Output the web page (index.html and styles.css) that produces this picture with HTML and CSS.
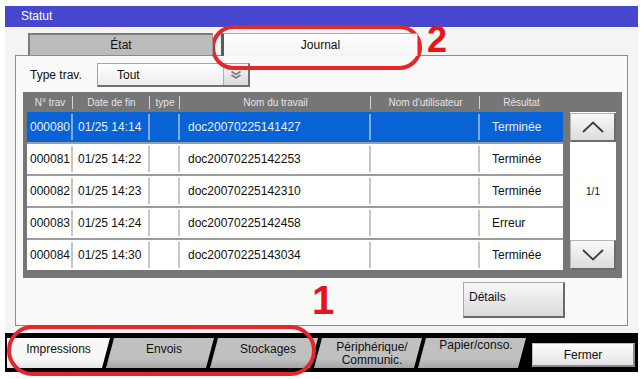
FILE: index.html
```html
<!DOCTYPE html>
<html lang="fr">
<head>
    <meta charset="UTF-8">
    <meta name="viewport" content="width=device-width, initial-scale=1.0">
    <title>Statut</title>
    <link rel="stylesheet" href="styles.css">
</head>
<body>

<div class="screen">
    <div class="title-bar">Statut</div>

    <div class="panel">
        <div class="tabs">
            <div class="tab">État</div>
            <div class="tab tab-active">Journal</div>
        </div>

        <div class="box">
            <div class="filter">
                <span class="filter-label">Type trav.</span>
                <div class="select">
                    <span class="select-value">Tout</span>
                    <span class="select-btn">
                        <svg width="12" height="10" viewBox="0 0 12 10">
                            <polyline points="1.5,1.5 6,4.5 10.5,1.5" fill="none" stroke="#7a7a7a" stroke-width="1.6"/>
                            <polyline points="1.5,5 6,8 10.5,5" fill="none" stroke="#7a7a7a" stroke-width="1.6"/>
                        </svg>
                    </span>
                </div>
            </div>

            <div class="list">
                <div class="list-head">
                    <div class="head-cell">N° trav</div>
                    <div class="head-cell">Date de fin</div>
                    <div class="head-cell">type</div>
                    <div class="head-cell">Nom du travail</div>
                    <div class="head-cell">Nom d'utilisateur</div>
                    <div class="head-cell">Résultat</div>
                </div>
                <div class="list-body">
                    <div class="rows">
                        <div class="row row-selected">
                            <div class="cell c1">000080</div>
                            <div class="cell c2">01/25 14:14</div>
                            <div class="cell c3"></div>
                            <div class="cell c4">doc20070225141427</div>
                            <div class="cell c5"></div>
                            <div class="cell c6">Terminée</div>
                        </div>
                        <div class="row">
                            <div class="cell c1">000081</div>
                            <div class="cell c2">01/25 14:22</div>
                            <div class="cell c3"></div>
                            <div class="cell c4">doc20070225142253</div>
                            <div class="cell c5"></div>
                            <div class="cell c6">Terminée</div>
                        </div>
                        <div class="row">
                            <div class="cell c1">000082</div>
                            <div class="cell c2">01/25 14:23</div>
                            <div class="cell c3"></div>
                            <div class="cell c4">doc20070225142310</div>
                            <div class="cell c5"></div>
                            <div class="cell c6">Terminée</div>
                        </div>
                        <div class="row">
                            <div class="cell c1">000083</div>
                            <div class="cell c2">01/25 14:24</div>
                            <div class="cell c3"></div>
                            <div class="cell c4">doc20070225142458</div>
                            <div class="cell c5"></div>
                            <div class="cell c6">Erreur</div>
                        </div>
                        <div class="row">
                            <div class="cell c1">000084</div>
                            <div class="cell c2">01/25 14:30</div>
                            <div class="cell c3"></div>
                            <div class="cell c4">doc20070225143034</div>
                            <div class="cell c5"></div>
                            <div class="cell c6">Terminée</div>
                        </div>
                    </div>

                    <div class="scroller">
                        <div class="scroll-btn">
                            <svg width="22" height="12" viewBox="0 0 22 12">
                                <polyline points="1,11 11,1.5 21,11" fill="none" stroke="#3c3c3c" stroke-width="1.8"/>
                            </svg>
                        </div>
                        <div class="page">1/1</div>
                        <div class="scroll-btn">
                            <svg width="22" height="12" viewBox="0 0 22 12">
                                <polyline points="1,1 11,10.5 21,1" fill="none" stroke="#3c3c3c" stroke-width="1.8"/>
                            </svg>
                        </div>
                    </div>
                </div>
            </div>

            <div class="actions">
                <div class="btn-details">Détails</div>
            </div>
        </div>
    </div>

    <div class="bottom-bar">
        <div class="btab btab-first">Impressions</div>
        <div class="btab">Envois</div>
        <div class="btab">Stockages</div>
        <div class="btab btab-two">Périphérique/<br>Communic.</div>
        <div class="btab btab-top">Papier/conso.</div>
        <div class="btn-close">Fermer</div>
    </div>
</div>

<!-- annotations drawn over the screen -->
<div class="ring ring-journal"></div>
<div class="ring ring-tabs"></div>
<span class="mark mark-2">2</span>
<span class="mark mark-1">1</span>

</body>
</html>
```

FILE: styles.css
```css
* {
    box-sizing: border-box;
}
body {
    margin: 0;
    background: #fff;
    font-family: 'Liberation Sans', Arial, sans-serif;
    font-size: 12px;
    color: #111;
}
.screen {
    width: 633px;
    margin: 6px 0 0 5px;
}
.title-bar {
    height: 21px;
    line-height: 21px;
    padding-left: 16px;
    background: #4646cf;
    color: #fff;
}
.panel {
    background: #f4f4f4;
    padding: 6px 10px 7px 10px;
}
.tabs {
    position: relative;
    z-index: 1;
    display: flex;
    align-items: flex-start;
    gap: 8px;
    height: 22px;
    padding-left: 13px;
}
.tab {
    width: 185px;
    height: 22px;
    display: flex;
    align-items: center;
    justify-content: center;
    background: #bcbcbc;
    border-top: 2px solid #7c7c7c;
    border-left: 2px solid #7c7c7c;
    border-right: 1px solid #9c9c9c;
}
.tab-active {
    width: 197px;
    height: 23px;
    background: linear-gradient(#fdfdfd, #f5f5f5);
    border-top: 1px solid #a8a8a8;
    border-left: 3px solid #5c5c5c;
    border-right: 1px solid #a8a8a8;
}
.box {
    background: #f9f9f9;
    border: 1px solid #8c8c8c;
    padding: 7px 5px 0 7px;
}
.filter {
    display: flex;
    align-items: center;
    height: 24px;
    padding-left: 7px;
}
.filter-label {
    width: 67px;
    font-size: 12px;
}
.select {
    display: flex;
    align-items: center;
    width: 153px;
    height: 24px;
    background: linear-gradient(#ffffff, #ededed);
    border: 1px solid #a4a4a4;
    border-right: 2px solid #707070;
    border-bottom: 2px solid #707070;
}
.select-value {
    padding-left: 19px;
}
.select-btn {
    margin-left: auto;
    width: 25px;
    height: 100%;
    display: flex;
    align-items: center;
    justify-content: center;
    border-left: 1px solid #b0b0b0;
    background: linear-gradient(#f6f6f6, #dcdcdc);
}
.list {
    margin-top: 5px;
    background: #767676;
    padding: 0 6px 8px 4px;
}
.list-head {
    display: grid;
    grid-template-columns: 46px 77px 30px 191px 109px 83px;
    height: 20px;
    font-size: 10px;
    color: #e4e4e4;
}
.head-cell {
    position: relative;
    display: flex;
    align-items: center;
    justify-content: center;
}
.head-cell::after {
    content: '';
    position: absolute;
    right: 0;
    top: 4px;
    bottom: 3px;
    width: 1px;
    background: #d4d4d4;
}
.head-cell:last-child::after {
    display: none;
}
.list-body {
    display: flex;
    gap: 7px;
}
.rows {
    width: 536px;
    background: #fff;
}
.row {
    display: grid;
    grid-template-columns: 46px 77px 30px 191px 109px 83px;
    height: 32px;
    border-bottom: 2px solid #9c9c9c;
}
.row:last-child {
    height: 30px;
    border-bottom: none;
}
.row-selected {
    background: #0a63d5;
    color: #e2efff;
}
.cell {
    position: relative;
    display: flex;
    align-items: center;
    white-space: nowrap;
}
.cell::after {
    content: '';
    position: absolute;
    right: 0;
    top: 2px;
    bottom: 2px;
    width: 2px;
    background: #c6c6c6;
}
.row-selected .cell::after {
    background: #78aef0;
}
.cell:last-child::after {
    display: none;
}
.c1 { padding-left: 3px; }
.c2 { padding-left: 5px; }
.c4 { padding-left: 8px; }
.c6 { padding-left: 12px; }
.scroller {
    width: 46px;
    display: flex;
    flex-direction: column;
    background: #fff;
}
.scroll-btn {
    height: 30px;
    display: flex;
    align-items: center;
    justify-content: center;
    background: linear-gradient(#f9f9f9, #dcdcdc);
    border: 1px solid #b4b4b4;
    border-right: 2px solid #6c6c6c;
    border-bottom: 2px solid #6c6c6c;
}
.scroller .scroll-btn:first-child {
    margin-top: 1px;
    height: 29px;
}
.page {
    flex: 1;
    display: flex;
    align-items: center;
    justify-content: center;
    font-size: 10px;
}
.actions {
    height: 47px;
    display: flex;
    justify-content: flex-end;
    align-items: flex-start;
    padding: 4px 57px 0 0;
}
.btn-details {
    width: 102px;
    height: 36px;
    padding: 7px 5px;
    background: linear-gradient(#f8f8f8, #dadada);
    border: 1px solid #a8a8a8;
    border-right: 2px solid #6a6a6a;
    border-bottom: 2px solid #6a6a6a;
}
.bottom-bar {
    display: flex;
    align-items: flex-start;
    height: 39px;
    padding: 5px 0 0 2px;
    background: #000;
}
.btab {
    width: 108px;
    height: 30px;
    margin-left: -4px;
    padding-left: 8px;
    display: flex;
    align-items: flex-start;
    justify-content: center;
    padding-top: 4px;
    text-align: center;
    background: linear-gradient(#c0c0c0 70%, #a6a6a6);
    clip-path: polygon(8px 0, 100% 0, calc(100% - 8px) 100%, 0 100%);
}
.btab-first {
    width: 103px;
    margin-left: 0;
    padding-left: 0;
    background: linear-gradient(#f8f8f8 70%, #e4e4e4);
    clip-path: polygon(0 0, 100% 0, calc(100% - 8px) 100%, 0 100%);
}
.btab-two {
    line-height: 13px;
    padding-top: 3px;
}
.btab-top {
    padding-top: 0;
}
.btn-close {
    width: 103px;
    height: 24px;
    margin: 5px 0 0 6px;
    display: flex;
    align-items: center;
    justify-content: center;
    background: linear-gradient(#fdfdfd, #e4e4e4);
    border: 1px solid #bdbdbd;
    border-right: 2px solid #8a8a8a;
    border-bottom: 2px solid #8a8a8a;
}
.ring {
    position: absolute;
    border: 4px solid #e6262b;
    border-radius: 26px;
}
.ring-journal {
    left: 211px;
    top: 25px;
    width: 211px;
    height: 45px;
}
.ring-tabs {
    left: 7px;
    top: 325px;
    width: 309px;
    height: 51px;
}
.mark {
    position: absolute;
    font-weight: bold;
    color: #e8141c;
}
.mark-2 {
    left: 427px;
    top: 22px;
    font-size: 36px;
    line-height: 36px;
}
.mark-1 {
    left: 312px;
    top: 280px;
    font-size: 40px;
    line-height: 40px;
}
```
